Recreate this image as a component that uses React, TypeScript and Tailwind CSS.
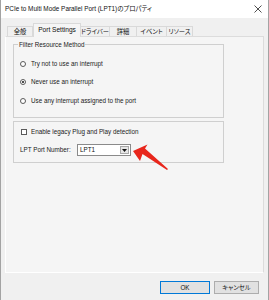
import React from "react";

const font = "font-['Liberation_Sans','Noto_Sans_CJK_JP',sans-serif] [font-feature-settings:'palt']";

function Tab({ label, w, selected }: { label: string; w: number; selected?: boolean }) {
  if (selected) {
    return (
      <div
        className="relative z-10 -mb-px h-[14px] flex items-center justify-center border border-b-0 border-[#d9d9d9] bg-[#f5f5f5]"
        style={{ width: w }}
      >
        <span className="text-[6.6px] text-[#111] -mt-[1px]">{label}</span>
      </div>
    );
  }
  return (
    <div
      className="h-[10px] flex items-center justify-center border border-b-0 border-l-0 first:border-l border-[#d9d9d9] bg-[#f0f0f0]"
      style={{ width: w }}
    >
      <span className="text-[6.3px] text-[#111]">{label}</span>
    </div>
  );
}

function Radio({ checked, label }: { checked?: boolean; label: string }) {
  return (
    <div className="h-[12px] flex items-center">
      <div className="w-[6px] h-[6px] rounded-full border border-[#5a5a5a] bg-white flex items-center justify-center">
        {checked && <div className="w-[2px] h-[2px] rounded-full bg-[#111]" />}
      </div>
      <span className="ml-[5px] text-[6.3px] text-[#1a1a1a]">{label}</span>
    </div>
  );
}

export default function App() {
  return (
    <div className={`w-[269px] h-[300px] flex flex-col bg-[#f0f0f0] border-x border-[#a3a3a3] ${font}`}>
      {/* title bar */}
      <div className="h-[18px] shrink-0 bg-white flex items-center justify-between pl-[4px] pr-[6px]">
        <span className="text-[6.4px] text-[#111]">PCIe to Multi Mode Parallel Port (LPT1)のプロパティ</span>
        <svg width="8" height="8" viewBox="0 0 8 8">
          <path d="M0.5 0.5 L7.5 7.5 M7.5 0.5 L0.5 7.5" stroke="#222" strokeWidth="0.8" />
        </svg>
      </div>

      {/* tabs */}
      <div className="mt-[5px] pl-[6px] h-[13px] flex items-end">
        <Tab label="全般" w={26} />
        <Tab label="Port Settings" w={48} selected />
        <Tab label="ドライバー" w={29} />
        <Tab label="詳細" w={27} />
        <Tab label="イベント" w={30} />
        <Tab label="リソース" w={26} />
      </div>

      {/* tab page */}
      <div className="mx-[4px] h-[237px] shrink-0 border border-[#dcdcdc] border-l-white border-b-white bg-[#f5f5f5] pl-[7px] pt-[7px]">
        {/* group 1 */}
        <div className="relative w-[211px] h-[74px] border border-[#cfcfcf] pl-[6px]">
          <span className="absolute left-[4px] -top-[4px] px-[1px] bg-[#f5f5f5] text-[6.3px] leading-[7px] text-[#1a1a1a]">
            Filter Resource Method
          </span>
          <div className="mt-[13px]">
            <Radio label="Try not to use an interrupt" />
          </div>
          <div className="mt-[6px]">
            <Radio checked label="Never use an interrupt" />
          </div>
          <div className="mt-[7px]">
            <Radio label="Use any interrupt assigned to the port" />
          </div>
        </div>

        {/* group 2 */}
        <div className="relative mt-[3px] w-[211px] h-[42px] border border-[#cfcfcf]">
          <div className="mt-[4px] pl-[7px] h-[12px] flex items-center">
            <div className="w-[6px] h-[6px] border border-[#5a5a5a] bg-white" />
            <span className="ml-[4px] text-[6.3px] text-[#1a1a1a]">Enable legacy Plug and Play detection</span>
          </div>
          <div className="mt-[6px] pl-[6px] h-[12px] flex items-center">
            <span className="w-[57px] text-[6.3px] text-[#1a1a1a]">LPT Port Number:</span>
            <div className="w-[54px] h-[12px] border border-[#8a8a8a] bg-white flex items-center justify-between pl-[2px] pr-[1px]">
              <span className="text-[6.3px] text-[#111]">LPT1</span>
              <div className="w-[9px] h-[8px] border border-[#a8a8a8] bg-[#e6e6e6] flex items-center justify-center">
                <svg width="5" height="3" viewBox="0 0 5 3">
                  <path d="M0 0 L5 0 L2.5 3 Z" fill="#111" />
                </svg>
              </div>
            </div>
          </div>
          {/* red arrow annotation */}
          <svg className="absolute left-0 top-0 overflow-visible" width="1" height="1">
            <polygon
              points="120,29 134.5,22.5 132,26.5 155,47 154,48 129.5,32 127,39"
              fill="#e8261c"
              transform="translate(-1,0)"
            />
          </svg>
        </div>
      </div>

      {/* buttons */}
      <div className="mt-[8px] flex justify-end gap-[4px] pr-[9px]">
        <div className="w-[50px] h-[13px] border border-[#0078d7] bg-[#e1e1e1] flex items-center justify-center">
          <span className="text-[6.3px] text-[#111]">OK</span>
        </div>
        <div className="w-[45px] h-[13px] border border-[#adadad] bg-[#e1e1e1] flex items-center justify-center">
          <span className="text-[6.3px] text-[#111]">キャンセル</span>
        </div>
      </div>
    </div>
  );
}
